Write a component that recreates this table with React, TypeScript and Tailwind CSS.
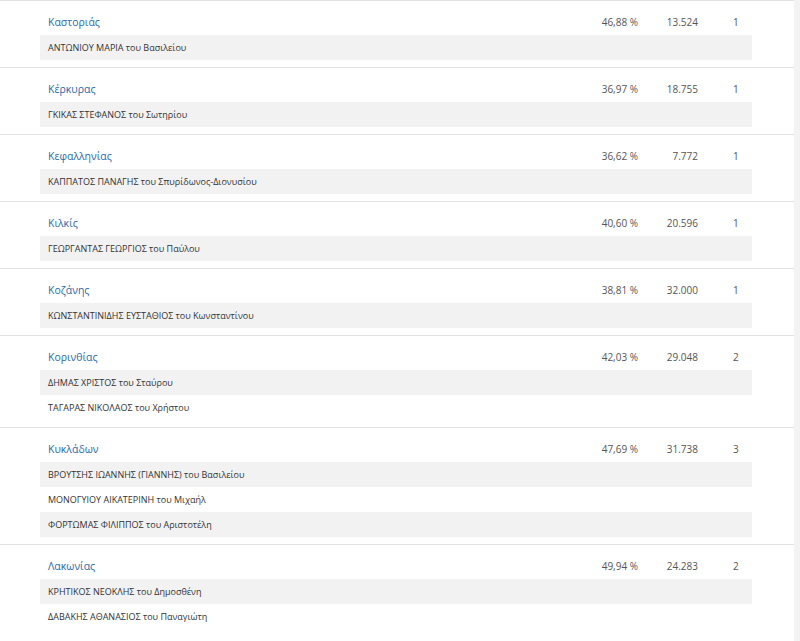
const data = [
  { region: 'Καστοριάς', pct: '46,88 %', votes: '13.524', seats: '1', names: ['ΑΝΤΩΝΙΟΥ ΜΑΡΙΑ του Βασιλείου'] },
  { region: 'Κέρκυρας', pct: '36,97 %', votes: '18.755', seats: '1', names: ['ΓΚΙΚΑΣ ΣΤΕΦΑΝΟΣ του Σωτηρίου'] },
  { region: 'Κεφαλληνίας', pct: '36,62 %', votes: '7.772', seats: '1', names: ['ΚΑΠΠΑΤΟΣ ΠΑΝΑΓΗΣ του Σπυρίδωνος-Διονυσίου'] },
  { region: 'Κιλκίς', pct: '40,60 %', votes: '20.596', seats: '1', names: ['ΓΕΩΡΓΑΝΤΑΣ ΓΕΩΡΓΙΟΣ του Παύλου'] },
  { region: 'Κοζάνης', pct: '38,81 %', votes: '32.000', seats: '1', names: ['ΚΩΝΣΤΑΝΤΙΝΙΔΗΣ ΕΥΣΤΑΘΙΟΣ του Κωνσταντίνου'] },
  { region: 'Κορινθίας', pct: '42,03 %', votes: '29.048', seats: '2', names: ['ΔΗΜΑΣ ΧΡΙΣΤΟΣ του Σταύρου', 'ΤΑΓΑΡΑΣ ΝΙΚΟΛΑΟΣ του Χρήστου'] },
  {
    region: 'Κυκλάδων',
    pct: '47,69 %',
    votes: '31.738',
    seats: '3',
    names: ['ΒΡΟΥΤΣΗΣ ΙΩΑΝΝΗΣ (ΓΙΑΝΝΗΣ) του Βασιλείου', 'ΜΟΝΟΓΥΙΟΥ ΑΙΚΑΤΕΡΙΝΗ του Μιχαήλ', 'ΦΟΡΤΩΜΑΣ ΦΙΛΙΠΠΟΣ του Αριστοτέλη'],
  },
  { region: 'Λακωνίας', pct: '49,94 %', votes: '24.283', seats: '2', names: ['ΚΡΗΤΙΚΟΣ ΝΕΟΚΛΗΣ του Δημοσθένη', 'ΔΑΒΑΚΗΣ ΑΘΑΝΑΣΙΟΣ του Παναγιώτη'] },
]

export default function App() {
  return (
    <div className="flex h-[641px] w-[800px] overflow-hidden bg-[#f3f3f3] font-['Open_Sans',sans-serif]">
      <div className="w-[794px] bg-white">
        {data.map((g) => (
          <div key={g.region} className="border-t border-[#e3e3e3] pb-[7px]">
            <div className="ml-[40px] grid h-[34px] w-[712px] grid-cols-[1fr_90px_60px_54px] pl-2 pt-[12px] text-[10px] leading-[18px] text-[#555]">
              <span className="text-[10.5px] text-[#2c6aa8]">{g.region}</span>
              <span className="text-right">{g.pct}</span>
              <span className="text-right">{g.votes}</span>
              <span className="pl-[35px]">{g.seats}</span>
            </div>
            {g.names.map((n, i) => (
              <div
                key={n}
                className={`ml-[40px] flex h-[25px] w-[712px] items-center pl-2 text-[9px] text-[#333] ${i % 2 === 0 ? 'bg-[#f2f2f3]' : 'bg-white'}`}
              >
                {n}
              </div>
            ))}
          </div>
        ))}
      </div>
    </div>
  )
}
